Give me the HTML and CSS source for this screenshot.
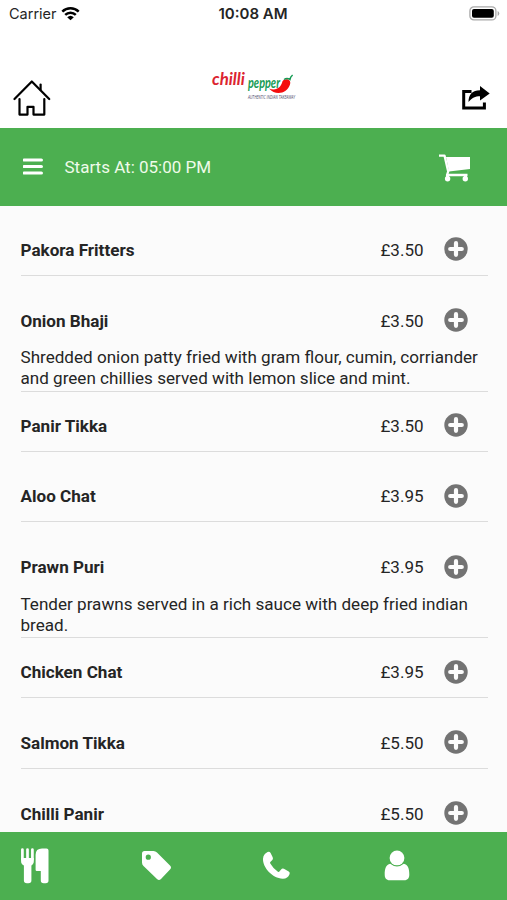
FILE: index.html
```html
<!DOCTYPE html>
<html lang="en">
<head>
<meta charset="utf-8">
<title>Chilli Pepper</title>
<link rel="stylesheet" href="styles.css">
</head>
<body>
<svg class="defs" aria-hidden="true">
  <symbol id="plus" viewBox="0 0 24 24"><circle cx="12" cy="12" r="11.7" fill="#737373"/><path d="M12 6.200v11.600M6.200 12h11.600" stroke="#fcfcfc" stroke-width="4.200" stroke-linecap="round"/></symbol>
</svg>
<div class="app">
  <div class="status">
    <div class="carrier"><span>Carrier</span>
      <svg width="19" height="15" viewBox="0 0 19 15"><g fill="none" stroke="#000" stroke-width="2.500"><path d="M1.300 5.600a11.800 11.800 0 0 1 16.400 0"/><path d="M4.200 8.800a7.600 7.600 0 0 1 10.600 0"/></g><path d="M6.200 11.200a4.800 4.800 0 0 1 6.600 0L9.500 14.300z"/></svg>
    </div>
    <div class="time">10:08 AM</div>
    <svg class="battery" width="31" height="15" viewBox="0 0 31 15"><rect x=".9" y=".9" width="26" height="13" rx="4" fill="#fff" stroke="#a9a9a9" stroke-width="1.300"/><rect x="3" y="3" width="21.800" height="8.800" rx="2"/><path d="M28.600 5v5q1.700-.8 1.700-2.500T28.600 5z" fill="#a9a9a9"/></svg>
  </div>
  <header class="top">
    <svg class="home" width="38" height="38" viewBox="0 0 38 38"><g fill="none" stroke="#000" stroke-width="2.200" stroke-linecap="round" stroke-linejoin="round"><path d="M1.500 20 18.800 2.500 36.200 20"/><path d="M6.500 20v15.600h8v-7.800h6v7.800h10.800V20"/><path d="M27.600 10.700V5.500"/></g></svg>
    <svg class="logo" width="88" height="31" viewBox="0 0 88 31">
      <text x="1" y="15" class="script red" textLength="33" lengthAdjust="spacingAndGlyphs">chilli</text>
      <text x="37" y="18" class="script green" textLength="32" lengthAdjust="spacingAndGlyphs">pepper</text>
      <path d="M58 18.500c7 3 12-1 13.500-7.200C73 7.700 81 8.500 79 14.500c-2.500 8.500-14 12-21 4z" fill="#f40d0d"/>
      <path d="M73 9.500q3-2 6 0 .4-2.600 2.600-4.500" fill="none" stroke="#169b55" stroke-width="1.500"/>
      <text x="37" y="28.500" class="tagline" textLength="47" lengthAdjust="spacingAndGlyphs">AUTHENTIC INDIAN TAKEAWAY</text>
    </svg>
    <svg class="share" width="30" height="26" viewBox="0 0 30 26"><path d="M10.500 6.400H2.700v16.700h20.700v-5.600" fill="none" stroke="#000" stroke-width="3"/><path d="M7.500 17C7.500 9.600 11.500 5.200 19 5.200V1l9.700 7.600L19 15.500v-4.200c-5 0-7.600 1.500-11.500 5.700z"/></svg>
  </header>
  <div class="bar">
    <svg class="menu" width="20" height="17" viewBox="0 0 20 17"><path d="M1.200 2h17.200M1.200 8.500h17.200M1.200 15h17.200" stroke="#fff" stroke-width="3.200" stroke-linecap="round"/></svg>
    <span class="starts">Starts At: 05:00 PM</span>
    <svg class="cart" width="33" height="28" viewBox="0 0 33 28"><path d="M8 3h24v12L11 17.500z" fill="#fff"/><path d="M1 1.600h5.500L10.200 17.500 9 21H29.500" fill="none" stroke="#fff" stroke-width="2.300" stroke-linejoin="round"/><path d="M9.500 24.500v-4M27.500 24.500v-4" stroke="#fff" stroke-width="3"/><circle cx="9.600" cy="24.700" r="2.700" fill="#fff"/><circle cx="27.300" cy="24.700" r="2.700" fill="#fff"/></svg>
  </div>
  <main class="list">
    <article class="item"><div class="row"><h2>Pakora Fritters</h2><span class="price">£3.50</span><svg class="add"><use href="#plus"/></svg></div></article>
    <article class="item described"><div class="row"><h2>Onion Bhaji</h2><span class="price">£3.50</span><svg class="add"><use href="#plus"/></svg></div><p>Shredded onion patty fried with gram flour, cumin, corriander<br>and green chillies served with lemon slice and mint.</p></article>
    <article class="item"><div class="row"><h2>Panir Tikka</h2><span class="price">£3.50</span><svg class="add"><use href="#plus"/></svg></div></article>
    <article class="item"><div class="row"><h2>Aloo Chat</h2><span class="price">£3.95</span><svg class="add"><use href="#plus"/></svg></div></article>
    <article class="item described"><div class="row"><h2>Prawn Puri</h2><span class="price">£3.95</span><svg class="add"><use href="#plus"/></svg></div><p>Tender prawns served in a rich sauce with deep fried indian<br>bread.</p></article>
    <article class="item"><div class="row"><h2>Chicken Chat</h2><span class="price">£3.95</span><svg class="add"><use href="#plus"/></svg></div></article>
    <article class="item"><div class="row"><h2>Salmon Tikka</h2><span class="price">£5.50</span><svg class="add"><use href="#plus"/></svg></div></article>
    <article class="item"><div class="row"><h2>Chilli Panir</h2><span class="price">£5.50</span><svg class="add"><use href="#plus"/></svg></div></article>
  </main>
  <nav class="tabs">
    <svg width="30" height="36" viewBox="0 0 30 36"><path d="M2.400 1.500v10M7.500 1.500v10M12.400 1.500v10" stroke="#fff" stroke-width="2.700" stroke-linecap="round"/><path d="M1.100 10h12.700v3.500c0 2-1 3-2.400 3.900V32.500q0 2.800-3 2.800h-1.500q-3 0-3-2.800V17.400C2 16.500 1.100 15.500 1.100 13.500zM22 .6h4.500q2 0 2 2v30q0 2.700-2.800 2.700h-2q-2.900 0-2.900-2.700V23h-4q-1.200 0-1.200-1.200V7Q15.600.6 22 .6z" fill="#fff"/></svg>
    <svg width="31" height="31" viewBox="0 0 31 31"><path fill-rule="evenodd" d="M3.500 1h9q2 0 3.500 1.500L29 15.600q2 2 0 4L20 28.900q-2 2-4 0L2.500 16Q1 14.500 1 12.500v-9Q1 1 3.500 1zM7.300 4.600a2.600 2.600 0 1 0 0 5.200 2.600 2.600 0 0 0 0-5.200z" fill="#fff"/></svg>
    <svg width="29" height="29" viewBox="0 0 29 29"><path d="M5.600 1.100q2-.8 3 1l2.100 4.200q.8 1.800-.6 2.900L8.300 11q-.5.700 0 1.600 3 5.300 7.600 8.100.9.500 1.500-.2l1.700-2.100q1.200-1.300 2.800-.6l4.800 2.600q1.700 1 .8 2.900-1.700 4.500-6.800 4.400C10.500 27.400.8 16.600 1 8q.3-5 4.600-6.900z" fill="#fff"/></svg>
    <svg class="person" width="26" height="31" viewBox="0 0 26 31"><circle cx="13" cy="7.900" r="7.400" fill="#fff"/><path d="M6.200 13.800q6.800 5.500 13.600 0c4.200.8 5.500 5 5.500 11 0 3-1.500 5.500-5 5.500H5.700c-3.500 0-5-2.500-5-5.500 0-6 1.300-10.200 5.500-11z" fill="#fff"/></svg>
  </nav>
</div>
</body>
</html>
```
FILE: styles.css
```css
* { box-sizing: border-box; }
body { margin: 0; font-family: Roboto, sans-serif; color: #252525; }
svg { display: block; flex: none; }
.defs { display: none; }
.app { width: 507px; height: 900px; display: flex; flex-direction: column; overflow: hidden; background: #fff; }
.status { height: 28px; flex: none; display: grid; grid-template-columns: 1fr auto 1fr; align-items: center; padding: 0 7px 0 9px; font: 14.500px Inter, sans-serif; }
.carrier { display: flex; align-items: center; gap: 4px; margin-top: -1px; }
.carrier svg { margin-top: -1px; }
.time { font-weight: 600; font-size: 15px; margin: -1px 0 0 -3px; }
.battery { justify-self: end; margin-top: -2px; }
.top { height: 100px; flex: none; display: flex; justify-content: space-between; align-items: flex-start; padding: 0 16px 0 12.500px; }
.home { margin-top: 51px; }
.logo { margin: 42px 0 0 -2px; overflow: visible; }
.share { margin-top: 57px; }
.script { font: italic 700 17px Lato, sans-serif; }
.red { fill: #dc2430; }
.green { font-size: 15px; fill: #169b55; }
.tagline { font: italic 4.500px "Open Sans", sans-serif; fill: #4b4668; }
.bar { height: 78px; flex: none; display: flex; align-items: center; padding: 0 36px 0 22.500px; background: #4caf50; }
.menu { margin-top: -1px; }
.starts { margin-left: 22px; color: #effbe9; font-size: 17px; }
.cart { margin-left: auto; margin-top: 1px; }
.list { flex: 1; min-height: 0; overflow: hidden; background: #fbfbfb; padding: 19px 19px 0 20.500px; }
.item { border-bottom: 1px solid #dcdcdc; margin-bottom: 19.900px; }
.described { margin-bottom: 9px; }
.row { height: 49.900px; display: flex; align-items: center; padding-right: 20.500px; }
h2 { margin: 0; font-size: 17.080px; font-weight: 700; }
.price { margin-left: auto; font-size: 17px; }
.add { width: 24px; height: 24px; margin: -1px 0 0 20px; }
p { margin: 1.500px -10px 1.500px 0; font-size: 17.080px; line-height: 21px; white-space: nowrap; }
.tabs { height: 68px; flex: none; display: grid; grid-template-columns: 120.700px 121px 121px 1fr; align-items: center; padding: 0 0 1px 20px; background: #4caf50; }
.person { margin-left: 1.500px; }
```
